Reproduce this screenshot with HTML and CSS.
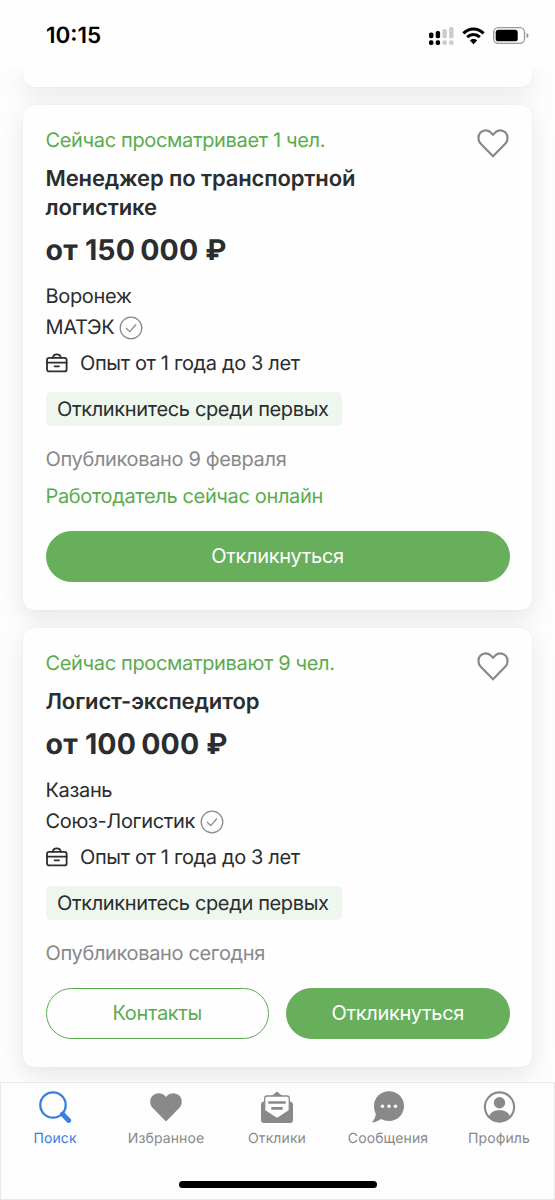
FILE: index.html
```html
<!DOCTYPE html>
<html lang="ru">
<head>
<meta charset="utf-8">
<meta name="viewport" content="width=device-width, initial-scale=1">
<title>Поиск вакансий</title>
<link rel="stylesheet" href="styles.css">
</head>
<body>
<svg class="defs" width="0" height="0" aria-hidden="true">
  <symbol id="heart" viewBox="0 0 32 29"><path d="M16 27.2 3.8 14.8C.6 11.500.8 6.200 3.500 3.500 6.400.7 10.800.7 13.500 3.300L16 5.800 18.500 3.300C21.200.7 25.600.7 28.500 3.500 31.200 6.200 31.400 11.500 28.200 14.800Z"/></symbol>
  <symbol id="check" viewBox="0 0 24 24"><circle cx="12" cy="12" r="10.800"/><path d="m7 12 3.700 3.600L17 8.500"/></symbol>
  <symbol id="case" viewBox="0 0 22 20"><rect x="1" y="4.800" width="19.600" height="13.600" rx="2"/><path d="M6.800 4.800C7 2.200 8 1.300 10.800 1.300S14.600 2.200 14.800 4.800M1 9.700H20.600M8.600 13.300H13"/></symbol>
</svg>
<div class="screen">
  <header class="status">
    <span class="time">10:15</span>
    <div class="indicators">
      <svg class="signal" width="26" height="19" viewBox="0 0 26 19">
        <g fill="#000"><rect x="0" y="5.500" width="4.400" height="5.700" rx="1.700"/><rect x="6.700" y="4" width="4.400" height="7.200" rx="1.700"/><rect x="0" y="13.300" width="4.400" height="4.600" rx="1.700"/><rect x="6.700" y="13.300" width="4.400" height="4.600" rx="1.700"/></g>
        <g fill="#ccc"><rect x="13.400" y="2" width="4.400" height="9.200" rx="1.500"/><rect x="20.100" y="0" width="4.400" height="11.200" rx="1.500"/><rect x="13.400" y="13.300" width="4.400" height="4.600" rx="1.700"/><rect x="20.100" y="13.300" width="4.400" height="4.600" rx="1.700"/></g>
      </svg>
      <svg class="wifi" width="23" height="18" viewBox="0 0 23 18">
        <g fill="none" stroke="#000" stroke-width="3.100"><path d="M1.400 6.400C7.200.6 15.800.6 21.600 6.400"/><path d="M5.200 10.200C9 6.700 14 6.700 17.800 10.200"/></g>
        <path d="M11.500 17.200 7.900 13.500C10 11.600 13 11.600 15.100 13.500Z"/>
      </svg>
      <svg class="battery" width="36" height="17" viewBox="0 0 36 17">
        <rect x=".7" y=".7" width="30.800" height="15.600" rx="4.500" fill="#fff" stroke="#999" stroke-width="1.300"/>
        <rect x="2.700" y="2.700" width="22" height="11.600" rx="2.600"/>
        <path d="M33.500 6C36.200 7 36.200 10.200 33.500 11.200Z" fill="#999"/>
      </svg>
    </div>
  </header>

  <main class="feed">
    <section class="card card-tail"></section>

    <article class="card">
      <div class="top">
        <div class="heading">
          <p class="viewing">Сейчас просматривает 1 чел.</p>
          <h2 class="title">Менеджер по транспортной логистике</h2>
        </div>
        <svg class="like" width="32" height="29"><use href="#heart"/></svg>
      </div>
      <p class="salary">от <span class="amount">150&nbsp;000</span> ₽</p>
      <p class="line">Воронеж</p>
      <p class="line company">МАТЭК <svg class="check" width="24" height="24"><use href="#check"/></svg></p>
      <p class="line experience"><svg class="case" width="22" height="20"><use href="#case"/></svg>Опыт от 1 года до 3 лет</p>
      <span class="badge">Откликнитесь среди первых</span>
      <p class="line published">Опубликовано 9 февраля</p>
      <p class="line online">Работодатель сейчас онлайн</p>
      <div class="actions"><button class="btn primary">Откликнуться</button></div>
    </article>

    <article class="card">
      <div class="top">
        <div class="heading">
          <p class="viewing">Сейчас просматривают 9 чел.</p>
          <h2 class="title">Логист-экспедитор</h2>
        </div>
        <svg class="like" width="32" height="29"><use href="#heart"/></svg>
      </div>
      <p class="salary">от <span class="amount">100&nbsp;000</span> ₽</p>
      <p class="line">Казань</p>
      <p class="line company">Союз-Логистик <svg class="check" width="24" height="24"><use href="#check"/></svg></p>
      <p class="line experience"><svg class="case" width="22" height="20"><use href="#case"/></svg>Опыт от 1 года до 3 лет</p>
      <span class="badge">Откликнитесь среди первых</span>
      <p class="line published">Опубликовано сегодня</p>
      <div class="actions"><button class="btn outline">Контакты</button><button class="btn primary">Откликнуться</button></div>
    </article>
  </main>

  <footer class="tabbar">
    <nav class="tabs">
      <a class="tab active">
        <svg width="34" height="34" viewBox="0 0 34 34"><circle cx="15" cy="15" r="12.700" fill="none" stroke="currentColor" stroke-width="2.300"/><path d="m24.500 24 6.200 6.500" stroke="currentColor" stroke-width="4.800" stroke-linecap="round"/></svg>
        <span>Поиск</span>
      </a>
      <a class="tab">
        <svg width="34" height="34" viewBox="0 0 34 34"><path fill="currentColor" d="M17 31.500 3.800 18C.4 14.500.5 8.800 3.500 5.700 7 2.300 12.500 2.400 15.600 5.600L17 7 18.400 5.600C21.500 2.400 27 2.300 30.500 5.700 33.500 8.800 33.600 14.500 30.200 18Z"/></svg>
        <span>Избранное</span>
      </a>
      <a class="tab">
        <svg width="34" height="34" viewBox="0 0 34 34"><path fill="currentColor" d="M11 6.500 17 1.600 23 6.500ZM1 14.500Q1 11.800 3.500 11.500H30.500Q33 11.800 33 14.500V30Q33 33 30 33H4Q1 33 1 30Z"/><path fill="#fdfdfd" stroke="currentColor" stroke-width="1.300" d="M7 6H27Q29.300 6 29.300 8.300V20.500L18.800 27.600Q17 28.800 15.200 27.600L4.700 20.500V8.300Q4.700 6 7 6Z"/><path d="M8.300 12.500H25.700M11.300 18.400H22.700" stroke="currentColor" stroke-width="2.700"/></svg>
        <span>Отклики</span>
      </a>
      <a class="tab">
        <svg width="34" height="34" viewBox="0 0 34 34"><path fill="currentColor" d="M18 1.300C26.700 1.300 33 7.700 33 16S26.700 31 18 31C15 31 12.300 30.300 10.200 29 8 30.300 5 32 2 32.400 1.500 32.400 1.300 32 1.600 31.600 3.900 29 4.700 26 4.700 23.500 3.600 21.300 3 18.700 3 16 3 7.700 9.300 1.300 18 1.300Z"/><g fill="#fdfdfd"><circle cx="11.500" cy="16.300" r="1.700"/><circle cx="18" cy="16.300" r="1.700"/><circle cx="24.500" cy="16.300" r="1.700"/></g></svg>
        <span>Сообщения</span>
      </a>
      <a class="tab">
        <svg width="34" height="34" viewBox="0 0 34 34"><circle cx="17.500" cy="17" r="14.600" fill="none" stroke="currentColor" stroke-width="2.100"/><circle cx="17.500" cy="12.800" r="5.700" fill="currentColor"/><path fill="currentColor" d="M7 26.500C8.500 22.200 12.500 20.300 17.500 20.300S26.500 22.200 28 26.500C25.500 30 22 31.800 17.500 31.800S9.500 30 7 26.500Z"/></svg>
        <span>Профиль</span>
      </a>
    </nav>
    <div class="home"></div>
  </footer>
</div>
</body>
</html>
```
FILE: styles.css
```css
* { box-sizing: border-box; }

body {
  margin: 0;
  background: #fdfdfd;
  color: #2b2d2e;
  font-family: Inter, "Liberation Sans", sans-serif;
  font-size: 20px;
  letter-spacing: -.35px;
  text-rendering: geometricPrecision;
}

p, h2 { margin: 0; }
svg { display: block; flex: none; }
.defs { position: absolute; }

.screen {
  display: flex;
  flex-direction: column;
  width: 555px;
  height: 1200px;
  overflow: hidden;
}

.status {
  display: flex;
  justify-content: space-between;
  flex: none;
  height: 67px;
  padding: 20px 26px 0 46px;
  background: #fefefe;
}
.time {
  color: #000;
  font-size: 22.500px;
  font-weight: 600;
  letter-spacing: 0;
  line-height: 31px;
}
.indicators { display: flex; padding-top: 6.5px; }
.wifi { margin-left: 7px; }
.battery { margin-left: 8px; }

.feed {
  display: flex;
  flex-direction: column;
  gap: 18.5px;
  flex: 1;
  min-height: 0;
  padding: 0 23px;
  overflow: hidden;
}

.card {
  flex: none;
  padding: 20px 22.500px 28px;
  border-radius: 11px;
  background: #fefefe;
  box-shadow: 0 8px 24px rgba(0, 0, 0, .095), 0 0 1px rgba(0, 0, 0, .12);
}
.card-tail {
  height: 19.5px;
  padding: 0;
  border-radius: 0 0 11px 11px;
}

.top { display: flex; justify-content: space-between; }
.heading { width: 350px; }
.viewing { color: #5bac4f; line-height: 30px; }
.title {
  margin-top: 10px;
  font-size: 22px;
  font-weight: 600;
  letter-spacing: -.12px;
  line-height: 29px;
}
.like {
  margin: 4px 1px 0 0;
  fill: none;
  stroke: #88898b;
  stroke-width: 2.200;
}
.salary {
  margin: 9px 0 13px;
  font-size: 28.500px;
  font-weight: 700;
  letter-spacing: .2px;
  line-height: 36px;
}
.amount { word-spacing: -2px; }

.line { line-height: 31px; }
.company { display: flex; align-items: center; gap: 5px; }
.check { fill: none; stroke: #88898b; stroke-width: 1.300; }
.experience { display: flex; align-items: center; gap: 12.500px; margin-top: 5px; }
.case {
  margin-bottom: 1px;
  fill: none;
  stroke: #2b2d2e;
  stroke-width: 1.800;
  stroke-linecap: round;
}
.badge {
  display: block;
  width: 296px;
  height: 34px;
  margin-top: 12.5px;
  padding-left: 11.5px;
  border-radius: 5px;
  background: #edf7ed;
  line-height: 34px;
}
.published { margin-top: 18px; color: #88898b; }
.online { margin-top: 6px; color: #5bac4f; }

.actions { display: flex; gap: 17px; margin-top: 19px; }
.btn {
  flex: 1;
  height: 51px;
  padding: 0;
  border: 1.500px solid #5bac4f;
  border-radius: 26px;
  font: inherit;
  letter-spacing: inherit;
}
.primary { border-color: #67af5b; background: #67af5b; color: #fff; }
.outline { background: #fefefe; color: #5bac4f; }

.tabbar {
  display: flex;
  flex-direction: column;
  justify-content: space-between;
  align-items: center;
  flex: none;
  height: 118px;
  padding: 7px 0 11px;
  border: 1px solid #e8e8e9;
  background: #fdfdfd;
}
.tabs {
  display: grid;
  grid-template-columns: repeat(5, 111px);
  width: 555px;
  margin-left: -1px;
}
.tab {
  display: flex;
  flex-direction: column;
  align-items: center;
  color: #88898b;
  font-size: 14px;
  letter-spacing: .1px;
  line-height: 20px;
}
.tab span { margin-top: 5px; }
.active { color: #387fdf; }
.home { width: 198px; height: 7px; border-radius: 4px; background: #000; }
```
